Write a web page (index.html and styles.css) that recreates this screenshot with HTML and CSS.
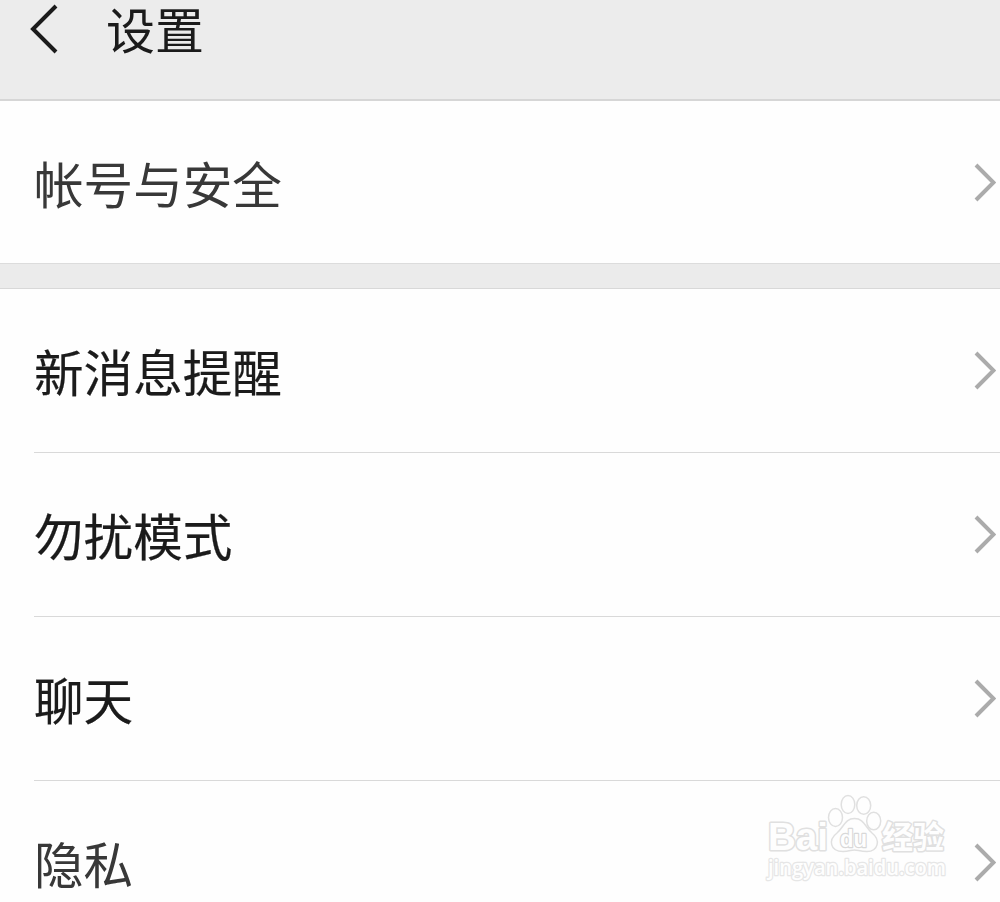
FILE: index.html
```html
<!DOCTYPE html>
<html lang="zh-CN">
<head>
    <meta charset="UTF-8">
    <meta name="viewport" content="width=device-width, initial-scale=1.0">
    <title>设置</title>
    <link rel="stylesheet" href="styles.css">
</head>
<body>
    <header class="header">
        <svg class="back" viewBox="0 0 30 50"><path d="M27 2 L4 25 L27 48"/></svg>
        <h1>设置</h1>
    </header>

    <div class="group first">
        <div class="row soft">
            <span>帐号与安全</span>
            <svg class="arrow" viewBox="0 0 24 40"><path d="M4 2 L21.500 19.500 L4 37"/></svg>
        </div>
    </div>

    <div class="group">
        <div class="row">
            <span>新消息提醒</span>
            <svg class="arrow" viewBox="0 0 24 40"><path d="M4 2 L21.500 19.500 L4 37"/></svg>
        </div>
        <div class="row">
            <span>勿扰模式</span>
            <svg class="arrow" viewBox="0 0 24 40"><path d="M4 2 L21.500 19.500 L4 37"/></svg>
        </div>
        <div class="row">
            <span>聊天</span>
            <svg class="arrow" viewBox="0 0 24 40"><path d="M4 2 L21.500 19.500 L4 37"/></svg>
        </div>
        <div class="row soft">
            <span>隐私</span>
            <svg class="arrow" viewBox="0 0 24 40"><path d="M4 2 L21.500 19.500 L4 37"/></svg>
        </div>
    </div>

    <svg class="watermark" viewBox="0 0 190 95">
        <text class="logo" x="7" y="60" font-size="39" textLength="60" lengthAdjust="spacingAndGlyphs">Bai</text>
        <ellipse cx="74.5" cy="27.5" rx="7" ry="9"/>
        <ellipse cx="87" cy="14.5" rx="6.8" ry="9"/>
        <ellipse cx="102.7" cy="15.5" rx="7" ry="8.8"/>
        <ellipse cx="112.7" cy="31" rx="7" ry="8.8"/>
        <path d="M93.500 28.500 C103 28.500 104 37 111 43 C120 50 117 61.500 106 61.500 C99 61.500 97 60 93.500 60 C90 60 88 61.500 82 61.500 C69 61.500 67 50 76 43 C83 37 84 28.500 93.500 28.500 Z"/>
        <text class="logo du" x="79" y="56.500" font-size="24" textLength="27" lengthAdjust="spacingAndGlyphs">du</text>
        <text class="logo cjk" x="121" y="58" font-size="31" textLength="62">经验</text>
        <text class="site" x="7" y="84.500" font-size="21" textLength="178" lengthAdjust="spacingAndGlyphs">jingyan.baidu.com</text>
    </svg>
</body>
</html>
```
FILE: styles.css
```css
* { box-sizing: border-box; }
body { margin: 0; height: 902px; overflow: hidden; position: relative; background: #fefefe; color: #1b1b1b; font-family: "Noto Sans CJK SC", sans-serif; font-size: 49.6px; line-height: 72px; }

.header { display: flex; align-items: flex-start; height: 101px; padding-left: 29px; background: #ececec; border-bottom: 2px solid #d6d6d6; }
.header h1 { margin: 1px 0 0 47px; font-size: 49px; font-weight: 400; line-height: 53px; }
.back { width: 30px; height: 50px; margin-top: 4px; fill: none; stroke: #1b1b1b; stroke-width: 4; }

.group { padding-left: 34px; }
.group.first { height: 187px; border-bottom: 24px solid #ebebeb; box-shadow: inset 0 -1px #dcdcdc; }
.group.first + .group { border-top: 1px solid #d8d8d8; }
.row { display: flex; align-items: center; justify-content: space-between; height: 164px; padding-right: 4px; border-bottom: 1px solid #d9d9d9; }
.row span { margin-bottom: 2px; -webkit-text-stroke: 0.2px; }
.first .row { height: 163px; border-bottom: 0; }
.row:last-child { border-bottom: 0; }
.row.soft { color: #383838; }
.row.soft span { -webkit-text-stroke: 0; }
.arrow { width: 24px; height: 40px; fill: none; stroke: #ababab; stroke-width: 4; }

/* logo in the bottom corner */
.watermark { position: absolute; left: 761px; top: 790px; width: 190px; height: 95px; fill: #fefefe; stroke: #e0e0e0; stroke-width: 1.5; stroke-linejoin: round; }
.logo { font-family: "Liberation Sans", sans-serif; font-weight: 700; paint-order: stroke; stroke-width: 3; }
.du { stroke: #d8d8d8; stroke-width: 2.5; }
.cjk { font-family: "Noto Sans CJK SC", sans-serif; }
.site { font-family: "Open Sans", sans-serif; font-weight: 600; paint-order: stroke; stroke: #e6e6e6; stroke-width: 2.5; }
```
